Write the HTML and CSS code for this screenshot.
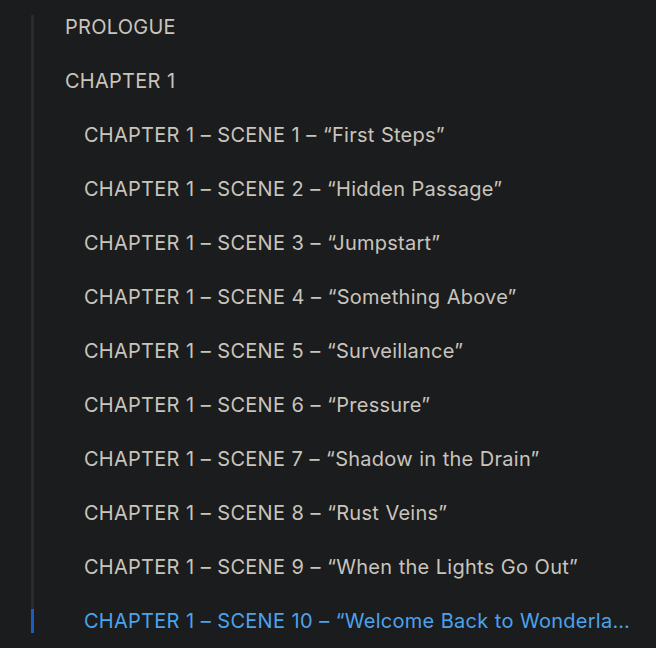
FILE: index.html
```html
<!DOCTYPE html>
<html lang="en">
<head>
  <meta charset="UTF-8" />
  <meta name="viewport" content="width=device-width, initial-scale=1.0"/>
  <title>Contents</title>
  <link rel="stylesheet" href="styles.css">
</head>
<body>
  <nav class="toc">
    <a class="toc-item">PROLOGUE</a>
    <a class="toc-item">CHAPTER 1</a>
    <a class="toc-item sub">CHAPTER 1 – SCENE 1 – “First Steps”</a>
    <a class="toc-item sub">CHAPTER 1 – SCENE 2 – “Hidden Passage”</a>
    <a class="toc-item sub">CHAPTER 1 – SCENE 3 – “Jumpstart”</a>
    <a class="toc-item sub">CHAPTER 1 – SCENE 4 – “Something Above”</a>
    <a class="toc-item sub">CHAPTER 1 – SCENE 5 – “Surveillance”</a>
    <a class="toc-item sub">CHAPTER 1 – SCENE 6 – “Pressure”</a>
    <a class="toc-item sub">CHAPTER 1 – SCENE 7 – “Shadow in the Drain”</a>
    <a class="toc-item sub">CHAPTER 1 – SCENE 8 – “Rust Veins”</a>
    <a class="toc-item sub">CHAPTER 1 – SCENE 9 – “When the Lights Go Out”</a>
    <a class="toc-item sub active">CHAPTER 1 – SCENE 10 – “Welcome Back to Wonderland”</a>
  </nav>
</body>
</html>
```

FILE: styles.css
```css
body {
  margin: 0;
  padding-top: 15px;
  background-color: #1b1c1e;
  font-family: Inter, Roboto, "Liberation Sans", sans-serif;
}
.toc {
  display: flex;
  flex-direction: column;
  gap: 30px;
  margin: 0 24px 0 31px;
  border-left: 3px solid #2a2b2e;
}
.toc-item {
  display: block;
  padding-left: 31px;
  font-size: 20px;
  line-height: 24px;
  letter-spacing: 0.25px;
  word-spacing: 0.5px;
  color: #c9c4bc;
  white-space: nowrap;
  overflow: hidden;
  text-overflow: ellipsis;
  cursor: pointer;
}
.toc-item.sub {
  padding-left: 50px;
}
.toc-item.active {
  margin-left: -3px;
  border-left: 3px solid #1a5cc0;
  color: #4ba3ec;
}
```
